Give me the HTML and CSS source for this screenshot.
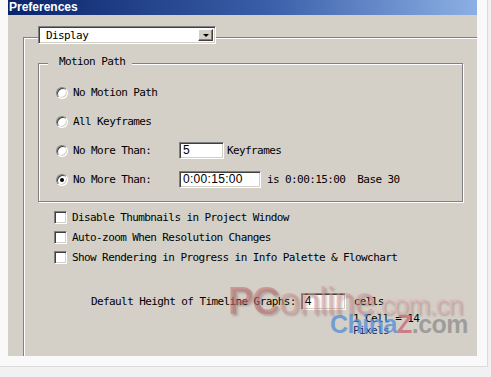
FILE: index.html
```
<!DOCTYPE html>
<html lang="en">
<head>
    <meta charset="UTF-8">
    <title>Preferences</title>
    <link rel="stylesheet" href="styles.css">
</head>
<body>

    <div class="page">
        <div class="dialog">

            <!-- Title Bar -->
            <div class="titlebar">Preferences</div>

            <!-- Outer etched frame -->
            <div class="frame">

                <div class="select">
                    <span class="select-text">Display</span>
                    <span class="select-btn"><span class="arrow"></span></span>
                </div>

                <!-- Motion Path group -->
                <div class="group">
                    <span class="legend">Motion Path</span>

                    <div class="radio-row">
                        <span class="radio"></span>
                        <span class="label">No Motion Path</span>
                    </div>
                    <div class="radio-row">
                        <span class="radio"></span>
                        <span class="label">All Keyframes</span>
                    </div>
                    <div class="radio-row">
                        <span class="radio"></span>
                        <span class="label label-fixed">No More Than:</span>
                        <span class="input input-short">5</span>
                        <span class="after-short">Keyframes</span>
                    </div>
                    <div class="radio-row">
                        <span class="radio checked"></span>
                        <span class="label label-fixed">No More Than:</span>
                        <span class="input input-long">0:00:15:00</span>
                        <span class="after-long">is 0:00:15:00  Base 30</span>
                    </div>
                </div>

                <!-- Checkboxes -->
                <div class="checks">
                    <div class="check-row">
                        <span class="checkbox"></span>
                        <span class="label">Disable Thumbnails in Project Window</span>
                    </div>
                    <div class="check-row">
                        <span class="checkbox"></span>
                        <span class="label">Auto-zoom When Resolution Changes</span>
                    </div>
                    <div class="check-row">
                        <span class="checkbox"></span>
                        <span class="label">Show Rendering in Progress in Info Palette &amp; Flowchart</span>
                    </div>
                </div>

                <!-- Timeline height -->
                <div class="height-row">
                    <span class="label">Default Height of Timeline Graphs:</span>
                    <span class="input input-short">4</span>
                    <span class="after-cells">cells</span>
                </div>
                <div class="cell-note">
                    <div>1 Cell = 14</div>
                    <div class="pixels">Pixels</div>
                </div>

            </div>
        </div>

        <!-- Watermarks -->
        <div class="wm-pconline"><span class="wm-pc">PC</span>online<span class="wm-cn">.com.cn</span></div>
        <div class="wm-chinaz"><span class="wm-china">China</span><span class="wm-z">Z</span><span class="wm-com">.com</span></div>
    </div>

</body>
</html>
```

FILE: styles.css
```
body, html {
    margin: 0;
    padding: 0;
    background: #f1f1f1;
    overflow: hidden;
}

.page {
    position: relative;
    width: 488px;
    height: 367px;
    padding-left: 8px;
    box-sizing: border-box;
    background: #f9f9f9;
    border-right: 1px solid #dcdcdc;
    border-bottom: 1px solid #dcdcdc;
}

.dialog {
    width: 469px;
    height: 356px;
    background: #d4d0c8;
    overflow: hidden;
    font-family: 'DejaVu Sans Mono', monospace;
    font-size: 11px;
    letter-spacing: -0.6px;
    color: #000;
}

/* Title bar */
.titlebar {
    height: 15px;
    line-height: 14px;
    padding-left: 1px;
    background: linear-gradient(to right, #0a246a 0%, #3a5ea8 55%, #8cb0e4 100%);
    color: #fff;
    font-family: 'Liberation Sans', Arial, sans-serif;
    font-weight: bold;
    font-size: 12px;
    letter-spacing: 0;
}

/* Etched outer frame */
.frame {
    margin-top: 22px;
    margin-left: 15px;
    height: 319px;
    border-top: 1px solid #808080;
    border-left: 1px solid #808080;
    box-shadow: inset 1px 1px 0 #fff;
}

/* Dropdown */
.select {
    position: relative;
    display: flex;
    align-items: center;
    justify-content: space-between;
    width: 178px;
    height: 18px;
    margin-top: -12px;
    margin-left: 14px;
    box-sizing: border-box;
    background: #fff;
    border: 1px solid;
    border-color: #808080 #fff #fff #808080;
    box-shadow: inset 1px 1px 0 #404040, inset -1px -1px 0 #d4d0c8;
    padding: 2px 2px 2px 7px;
}

.select-btn {
    display: flex;
    align-items: center;
    justify-content: center;
    width: 15px;
    height: 12px;
    box-sizing: border-box;
    background: #d4d0c8;
    border: 1px solid;
    border-color: #fff #404040 #404040 #fff;
    box-shadow: inset -1px -1px 0 #808080;
}

.arrow {
    width: 0;
    height: 0;
    border-left: 3px solid transparent;
    border-right: 3px solid transparent;
    border-top: 3px solid #000;
    margin-top: 1px;
}

/* Motion Path group */
.group {
    position: relative;
    width: 425px;
    height: 139px;
    margin-top: 19px;
    margin-left: 14px;
    box-sizing: border-box;
    border: 1px solid #808080;
    box-shadow: inset 1px 1px 0 #fff, 1px 1px 0 #fff;
    padding: 14px 0 0 17px;
}

.legend {
    position: absolute;
    top: -9px;
    left: 9px;
    line-height: 14px;
    padding: 0 7px 0 11px;
    background: #d4d0c8;
}

.radio-row {
    display: flex;
    align-items: center;
    height: 29px;
}

.radio {
    position: relative;
    width: 12px;
    height: 12px;
    box-sizing: border-box;
    border-radius: 50%;
    background: #fff;
    border: 1px solid;
    border-color: #808080 #fff #fff #808080;
    box-shadow: inset 1px 1px 0 #404040, inset -1px -1px 0 #d4d0c8;
    margin-right: 5px;
}

.radio.checked::after {
    content: "";
    position: absolute;
    top: 3px;
    left: 3px;
    width: 4px;
    height: 4px;
    border-radius: 50%;
    background: #000;
}

.label {
    white-space: pre;
}

.label-fixed {
    width: 106px;
}

.input {
    height: 17px;
    box-sizing: border-box;
    background: #fff;
    border: 1px solid;
    border-color: #808080 #fff #fff #808080;
    box-shadow: inset 1px 1px 0 #404040, inset -1px -1px 0 #d4d0c8;
    padding: 0 3px;
    line-height: 15px;
    font-family: 'Liberation Sans', Arial, sans-serif;
    font-size: 12px;
    letter-spacing: 0.3px;
}

.input-short {
    width: 45px;
}

.input-long {
    width: 82px;
}

.after-short {
    margin-left: 3px;
}

.after-long {
    margin-left: 6px;
    white-space: pre;
}

/* Checkboxes */
.checks {
    margin-top: 5px;
    margin-left: 30px;
}

.check-row {
    display: flex;
    align-items: center;
    height: 20px;
}

.checkbox {
    width: 13px;
    height: 13px;
    box-sizing: border-box;
    background: #fff;
    border: 1px solid;
    border-color: #808080 #fff #fff #808080;
    box-shadow: inset 1px 1px 0 #404040, inset -1px -1px 0 #d4d0c8;
    margin-right: 5px;
}

/* Timeline height */
.height-row {
    display: flex;
    align-items: center;
    height: 17px;
    margin-top: 26px;
    margin-left: 67px;
}

.height-row .input {
    margin-left: 5px;
}

.after-cells {
    margin-left: 8px;
}

.cell-note {
    margin-top: 3px;
    margin-left: 329px;
    line-height: 12px;
}

.pixels {
    color: #1a2a6a;
}

/* Watermarks */
.wm-pconline {
    position: absolute;
    top: 280px;
    left: 228px;
    font-family: 'Liberation Sans', Arial, sans-serif;
    font-size: 38px;
    letter-spacing: -1px;
    color: rgba(214, 150, 150, 0.55);
    text-shadow: 2px 2px 2px rgba(120, 90, 90, 0.35);
}

.wm-pc {
    font-weight: bold;
    color: rgba(190, 110, 110, 0.55);
}

.wm-cn {
    font-size: 27px;
    color: rgba(230, 175, 175, 0.55);
}

.wm-chinaz {
    position: absolute;
    top: 310px;
    left: 330px;
    font-family: 'Liberation Sans', Arial, sans-serif;
    font-weight: bold;
    font-size: 25px;
    letter-spacing: -0.5px;
}

.wm-china {
    color: rgba(80, 140, 215, 0.75);
}

.wm-z {
    color: rgba(200, 90, 110, 0.7);
}

.wm-com {
    color: rgba(140, 140, 140, 0.75);
}
```
